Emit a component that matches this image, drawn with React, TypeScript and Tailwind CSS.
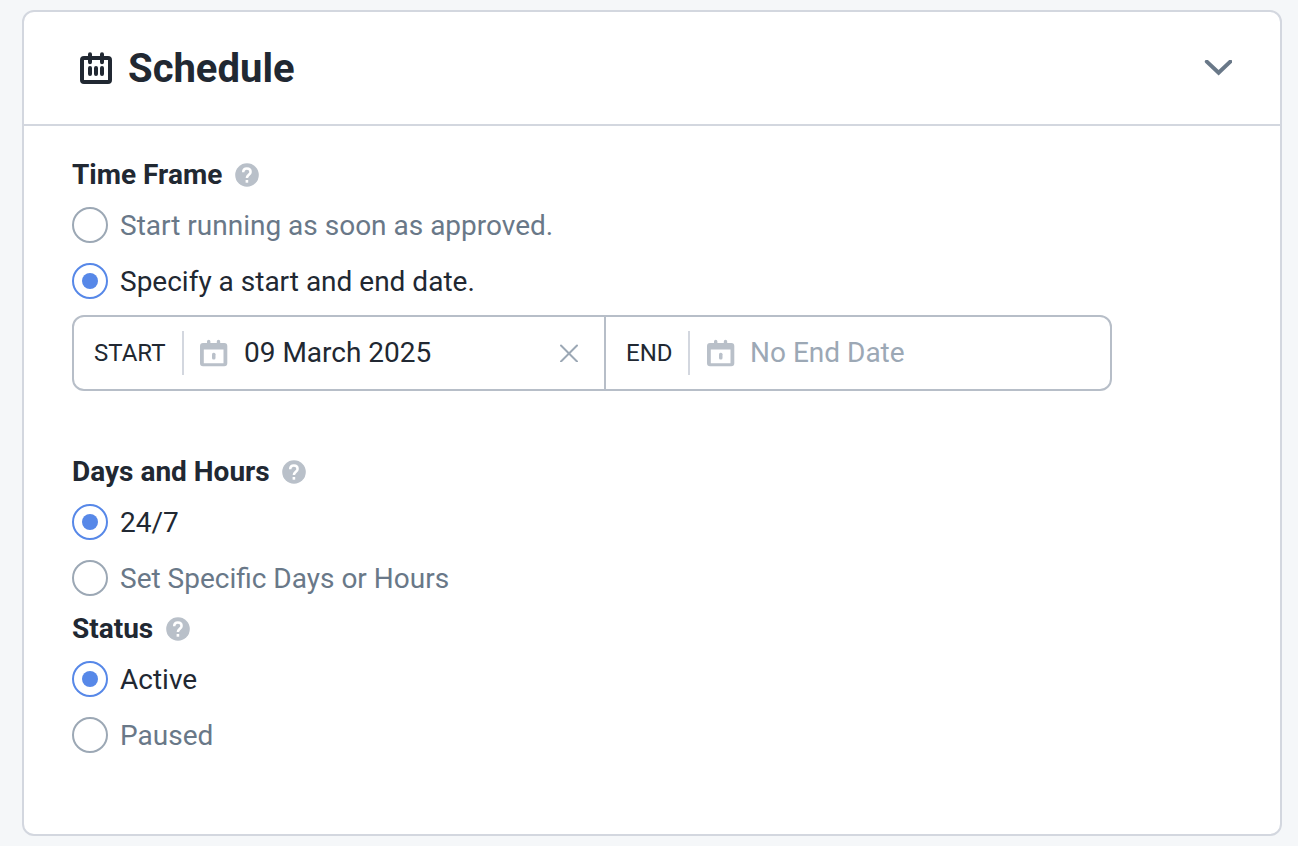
import { useState } from 'react'
import { clsx } from 'clsx'

type RadioProps = {
  name: string
  label: string
  checked: boolean
  onSelect: () => void
}

function Radio({ name, label, checked, onSelect }: RadioProps) {
  return (
    <label className="flex h-9 cursor-pointer items-center gap-3">
      <input type="radio" name={name} checked={checked} onChange={onSelect} className="sr-only" />
      <span
        className={clsx(
          'flex size-9 shrink-0 items-center justify-center rounded-full border-2',
          checked ? 'border-[#5788e8]' : 'border-[#9ca8b5]',
        )}
      >
        {checked && <span className="size-4 rounded-full bg-[#5788e8]" />}
      </span>
      <span className={clsx('pt-0.5 text-[28px] leading-9', checked ? 'text-[#212832]' : 'text-[#697888]')}>
        {label}
      </span>
    </label>
  )
}

function HelpIcon() {
  return (
    <svg viewBox="0 0 24 24" className="size-6" aria-hidden>
      <circle cx="12" cy="12" r="11.8" fill="#b9c0c9" />
      <path
        d="M8.2 9.3C8.2 7 9.7 5.5 11.9 5.5c2.3 0 3.7 1.4 3.7 3.4 0 2.8-3.7 3-3.7 6.1"
        fill="none"
        stroke="#fff"
        strokeWidth="2.5"
      />
      <rect x="10.6" y="17" width="2.6" height="2.7" fill="#fff" />
    </svg>
  )
}

function GroupLabel({ children }: { children: string }) {
  return (
    <div className="flex h-8 items-center gap-[12.5px]">
      <h3 className="text-[28px] font-bold leading-8">{children}</h3>
      <HelpIcon />
    </div>
  )
}

function ScheduleIcon() {
  return (
    <svg viewBox="0 0 32 32" className="size-8" fill="none" stroke="#212832" strokeWidth="4" aria-hidden>
      <rect x="2" y="6" width="28" height="24" rx="2" />
      <path d="M10 2.3v8M22 2.3v8M10 16v6M16 16v6M22 16v6" strokeLinecap="round" />
    </svg>
  )
}

function DateIcon() {
  return (
    <svg viewBox="0 0 28 28" className="size-7" aria-hidden>
      <path
        fill="#b9c0c9"
        fillRule="evenodd"
        d="M7 2.5a1.7 1.7 0 0 1 3.4 0V4h6.4V2.5a1.7 1.7 0 0 1 3.4 0V4H24.3a3 3 0 0 1 3 3v17.3a3 3 0 0 1-3 3H3a3 3 0 0 1-3-3V7a3 3 0 0 1 3-3h4zM3.8 10.4v13.8h19.7V10.4z"
      />
      <rect x="12" y="13.8" width="3.5" height="6.6" rx="1.5" fill="#b9c0c9" />
    </svg>
  )
}

export default function App() {
  const [frame, setFrame] = useState('dates')
  const [hours, setHours] = useState('always')
  const [status, setStatus] = useState('active')
  const [start, setStart] = useState('09 March 2025')

  return (
    <main className="h-screen overflow-hidden bg-[#f5f7f9] pl-[22px] pr-4 pt-2.5 font-[Roboto,sans-serif] text-[#212832]">
      <section className="h-[826px] rounded-xl border-2 border-[#d3d7df] bg-white">
        <header className="flex h-[114px] items-center justify-between border-b-2 border-[#d3d7df] pl-14 pr-12">
          <div className="flex items-center gap-4">
            <ScheduleIcon />
            <h2 className="pt-0.5 text-[40px] font-bold leading-12">Schedule</h2>
          </div>
          <button type="button" aria-label="Collapse" className="cursor-pointer">
            <svg viewBox="0 0 28 16" className="h-4 w-7" fill="none" stroke="#697888" strokeWidth="4" aria-hidden>
              <path d="M2.8 1.6l11.8 11.2L26.3 1.6" strokeLinecap="round" />
            </svg>
          </button>
        </header>

        <div className="px-12 pt-[33px]">
          <GroupLabel>Time Frame</GroupLabel>
          <div className="mt-4 flex flex-col gap-5">
            <Radio
              name="frame"
              label="Start running as soon as approved."
              checked={frame === 'asap'}
              onSelect={() => setFrame('asap')}
            />
            <Radio
              name="frame"
              label="Specify a start and end date."
              checked={frame === 'dates'}
              onSelect={() => setFrame('dates')}
            />
          </div>

          <div className="mt-4 flex h-[76px] w-[1040px] rounded-xl border-2 border-[#b7bec8]">
            <div className="flex w-[532px] items-center border-r-2 border-[#b7bec8] pl-5 pr-[26px]">
              <span className="w-[88px] text-2xl">START</span>
              <span className="h-11 w-0.5 bg-[#d3d7df]" />
              <span className="ml-4 mr-4">
                <DateIcon />
              </span>
              <span className="flex-1 text-[28px] leading-9">{start}</span>
              <button type="button" aria-label="Clear start date" onClick={() => setStart('')} className="cursor-pointer">
                <svg viewBox="0 0 18 18" className="size-[18px]" fill="none" stroke="#9ca8b5" strokeWidth="2" aria-hidden>
                  <path d="M1 1.5l16 16M17 1.5l-16 16" strokeLinecap="round" />
                </svg>
              </button>
            </div>
            <div className="flex flex-1 items-center pl-5">
              <span className="w-[62px] text-2xl">END</span>
              <span className="h-11 w-0.5 bg-[#d3d7df]" />
              <span className="ml-[17px] mr-[15px]">
                <DateIcon />
              </span>
              <span className="text-[28px] leading-9 text-[#9ca8b5]">No End Date</span>
            </div>
          </div>

          <div className="mt-[65px]">
            <GroupLabel>Days and Hours</GroupLabel>
            <div className="mt-4 flex flex-col gap-5">
              <Radio name="hours" label="24/7" checked={hours === 'always'} onSelect={() => setHours('always')} />
              <Radio
                name="hours"
                label="Set Specific Days or Hours"
                checked={hours === 'specific'}
                onSelect={() => setHours('specific')}
              />
            </div>
          </div>

          <div className="mt-[17px]">
            <GroupLabel>Status</GroupLabel>
            <div className="mt-4 flex flex-col gap-5">
              <Radio name="status" label="Active" checked={status === 'active'} onSelect={() => setStatus('active')} />
              <Radio name="status" label="Paused" checked={status === 'paused'} onSelect={() => setStatus('paused')} />
            </div>
          </div>
        </div>
      </section>
    </main>
  )
}
